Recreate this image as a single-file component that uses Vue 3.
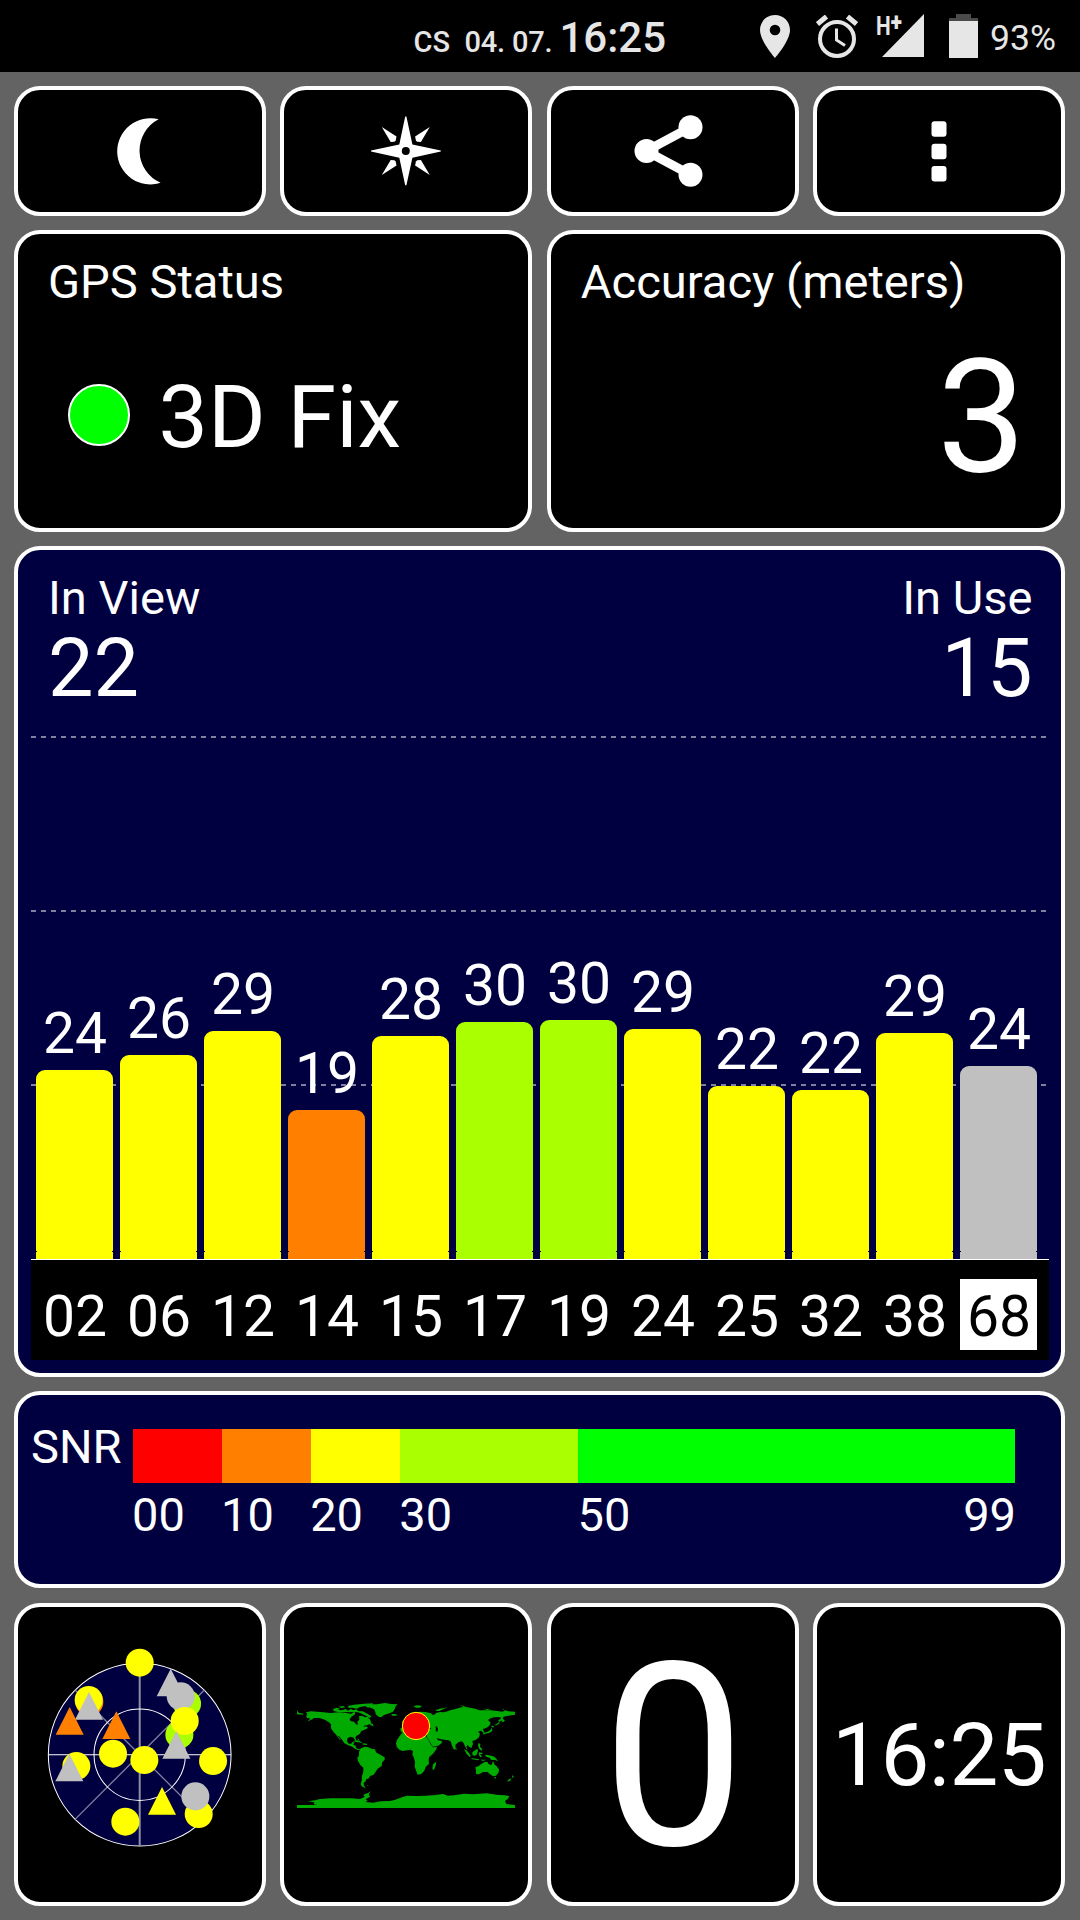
<script setup>
import { ref } from 'vue'

let inView = ref(22)
let inUse = ref(15)

let satellites = ref([
  { prn: '02', snr: 24, height: 189, level: 'yellow' },
  { prn: '06', snr: 26, height: 204, level: 'yellow' },
  { prn: '12', snr: 29, height: 228, level: 'yellow' },
  { prn: '14', snr: 19, height: 149, level: 'orange' },
  { prn: '15', snr: 28, height: 223, level: 'yellow' },
  { prn: '17', snr: 30, height: 237, level: 'lime' },
  { prn: '19', snr: 30, height: 239, level: 'lime' },
  { prn: '24', snr: 29, height: 230, level: 'yellow' },
  { prn: '25', snr: 22, height: 173, level: 'yellow' },
  { prn: '32', snr: 22, height: 169, level: 'yellow' },
  { prn: '38', snr: 29, height: 226, level: 'yellow' },
  { prn: '68', snr: 24, height: 193, level: 'gray', selected: true }
])

let scale = ref([
  { from: '00', size: 10, level: 'red' },
  { from: '10', size: 10, level: 'orange' },
  { from: '20', size: 10, level: 'yellow' },
  { from: '30', size: 20, level: 'lime' },
  { from: '50', size: 49, level: 'green', to: '99' }
])

// circles are GPS, triangles are GLONASS (y is the tip)
let sky = ref([
  { type: 'circle', x: 330, y: 97, level: 'yellow' },
  { type: 'triangle', x: 423, y: 115, level: 'gray' },
  { type: 'circle', x: 472, y: 220, level: 'lime' },
  { type: 'circle', x: 453, y: 198, level: 'gray' },
  { type: 'circle', x: 449, y: 313, level: 'lime' },
  { type: 'circle', x: 465, y: 272, level: 'yellow' },
  { type: 'triangle', x: 440, y: 302, level: 'gray' },
  { type: 'circle', x: 179, y: 215, level: 'orange' },
  { type: 'circle', x: 177, y: 209, level: 'yellow' },
  { type: 'triangle', x: 178, y: 185, level: 'gray' },
  { type: 'triangle', x: 120, y: 230, level: 'orange' },
  { type: 'triangle', x: 260, y: 243, level: 'orange' },
  { type: 'circle', x: 250, y: 370, level: 'yellow' },
  { type: 'circle', x: 344, y: 389, level: 'yellow' },
  { type: 'circle', x: 550, y: 392, level: 'yellow' },
  { type: 'circle', x: 140, y: 407, level: 'yellow' },
  { type: 'triangle', x: 119, y: 370, level: 'gray' },
  { type: 'triangle', x: 397, y: 470, level: 'yellow' },
  { type: 'circle', x: 507, y: 551, level: 'yellow' },
  { type: 'circle', x: 497, y: 498, level: 'gray' },
  { type: 'circle', x: 287, y: 574, level: 'yellow' }
])

//----------------------------------functions----------------------------//

function trianglePoints(item) {
  return `${item.x},${item.y} ${item.x - 42},${item.y + 83} ${item.x + 42},${item.y + 83}`
}
</script>

<template>
  <div class="screen">
    <header class="status-bar">
      <span class="carrier">CS</span>
      <span class="date">04. 07.</span>
      <span class="clock">16:25</span>
      <svg class="pin" viewBox="0 0 30 43">
        <path fill-rule="evenodd" d="M15 0C6.600 0 0 6.600 0 15C0 26 15 43 15 43S30 26 30 15C30 6.600 23.400 0 15 0ZM15 9.700A5.300 5.300 0 1 1 15 20.300A5.300 5.300 0 1 1 15 9.700Z" />
      </svg>
      <svg class="alarm" viewBox="0 0 42 43">
        <circle cx="21" cy="24" r="17" />
        <path d="M20.500 13.500V25L29 30.500" class="hands" />
        <path d="M1.500 9L10.500 1.500M40.500 9L31.500 1.500" class="bells" />
      </svg>
      <div class="signal">
        <span class="network">H<b>+</b></span>
        <svg viewBox="0 0 42 43">
          <path d="M0 43L42 0V43Z" />
        </svg>
      </div>
      <svg class="battery" viewBox="0 0 29 44">
        <path d="M7 0H22V4H29V7H0V4H7Z" class="empty" />
        <path d="M0 7H29V44H0Z" />
      </svg>
      <span class="percent">93%</span>
    </header>

    <main class="panels">
      <div class="row tools">
        <button class="card">
          <svg viewBox="99.900 111 80 80">
            <path d="M158.500 119.300A33.100 33.100 0 1 0 160.500 182.800A35.200 35.200 0 0 1 158.500 119.300Z" />
          </svg>
        </button>
        <button class="card">
          <svg viewBox="366.200 111 80 80">
            <path fill-rule="evenodd" d="M405.400 116.500H406.600L412.600 144.500L441 150.500V151.500L412.600 157.700L406.600 185.300H405.400L399.500 157.700L371.200 151.500V150.500L399.500 144.500ZM406 147A4 4 0 1 0 406 155A4 4 0 1 0 406 147Z" />
            <path d="M382 127L396.700 136.500L395.900 140.600L394.600 141.800L390.900 142Z" />
            <path d="M430 127L415.300 136.500L416.100 140.600L417.400 141.800L421.100 142Z" />
            <path d="M382 175L396.700 165.500L395.900 161.400L394.600 160.200L390.900 160Z" />
            <path d="M430 175L415.300 165.500L416.100 161.400L417.400 160.200L421.100 160Z" />
          </svg>
        </button>
        <button class="card">
          <svg viewBox="632.500 111 80 80">
            <path d="M690 127.300L645.700 151L690 174.700" class="link" />
            <circle cx="646" cy="151" r="12" />
            <circle cx="690" cy="127.300" r="12" />
            <circle cx="690" cy="174.700" r="12" />
          </svg>
        </button>
        <button class="card">
          <svg viewBox="899 111 80 80">
            <rect x="931.500" y="121.300" width="15" height="15.500" rx="3" />
            <rect x="931.500" y="143.700" width="15" height="15.500" rx="3" />
            <rect x="931.500" y="166" width="15" height="15.500" rx="3" />
          </svg>
        </button>
      </div>

      <div class="row fix">
        <section class="card text-card">
          <h2>GPS Status</h2>
          <div class="fix-value">
            <i class="dot"></i>
            <span>3D Fix</span>
          </div>
        </section>
        <section class="card text-card">
          <h2>Accuracy (meters)</h2>
          <div class="accuracy-value">3</div>
        </section>
      </div>

      <section class="card navy signals">
        <div class="totals">
          <div>
            <h2>In View</h2>
            <div class="total">{{ inView }}</div>
          </div>
          <div class="right">
            <h2>In Use</h2>
            <div class="total">{{ inUse }}</div>
          </div>
        </div>
        <div class="chart">
          <svg class="grid-lines" viewBox="0 0 1018 523">
            <path d="M0 1H1015M0 175H1015M0 349H1015" />
          </svg>
          <div v-for="item in satellites" :key="item.prn" class="column">
            <span>{{ item.snr }}</span>
            <div :class="['bar', item.level]" :style="{ height: item.height + 'px' }"></div>
          </div>
        </div>
        <div class="prns">
          <span v-for="item in satellites" :key="item.prn" :class="{ selected: item.selected }">{{ item.prn }}</span>
        </div>
      </section>

      <section class="card navy snr">
        <h2>SNR</h2>
        <div class="scale">
          <div v-for="item in scale" :key="item.from" class="step" :style="{ flexGrow: item.size }">
            <div :class="['swatch', item.level]"></div>
            <div class="ticks">
              <span>{{ item.from }}</span>
              <span v-if="item.to">{{ item.to }}</span>
            </div>
          </div>
        </div>
      </section>

      <div class="row bottom">
        <section class="card">
          <svg class="radar" viewBox="55 98 550 550">
            <circle cx="330" cy="373" r="274" class="ring sky" />
            <path d="M136 567L524 179M136 179L524 567" class="diagonal" />
            <path d="M330 99V647" class="meridian" />
            <circle cx="330" cy="373" r="137" class="ring" />
            <path d="M56 373H604" class="horizon" />
            <template v-for="(item, index) in sky" :key="index">
              <circle v-if="item.type === 'circle'" :cx="item.x" :cy="item.y" r="42" :class="item.level" />
              <polygon v-else :points="trianglePoints(item)" :class="item.level" />
            </template>
          </svg>
        </section>
        <section class="card">
          <svg class="world" viewBox="51 69 654 315">
            <!-- north america -->
            <path d="M51 91L56 98L70 101L68 104L51 103ZM78 97L92 94L112 95L130 97L152 99L175 97L196 98L214 102L217 99L222 96L226 98L224 104L216 109L209 117L211 123L222 125L228 133L234 134L232 125L238 119L237 109L245 107L256 112L263 110L271 120L274 130L263 135L253 137L250 141L260 139L264 144L254 149L243 154L240 161L229 168L226 173L229 181L226 183L221 173L212 170L203 174L201 183L206 191L214 191L216 187L223 186L220 194L227 197L228 204L236 208L245 206L242 210L234 210L226 207L217 200L205 196L193 190L187 181L177 169L173 168L183 181L179 179L169 165L160 155L153 145L153 133L146 126L134 119L119 114L103 114L94 119L84 124L86 120L92 116L82 114L78 109L82 103Z" />
            <!-- arctic islands -->
            <path d="M160 87L170 83L180 86L174 90L187 91L196 87L205 92L212 86L220 91L228 88L236 94L248 94L262 101L274 109L270 114L259 108L246 101L234 97L222 96L210 97L196 96L182 97L170 95L160 92ZM176 80L190 78L196 82L184 84ZM204 78L222 74L252 71L280 70L276 74L258 78L240 81L230 86L216 83L206 84ZM268 127L278 132L281 139L272 136Z" />
            <!-- greenland, iceland -->
            <path d="M257 79L270 73L290 73L315 69L334 72L353 73L347 79L344 88L338 96L324 101L312 105L304 112L296 110L287 103L286 96L282 88L272 83L259 82ZM334 102L344 102L352 104L349 107L337 107Z" />
            <!-- caribbean -->
            <path d="M218 184L232 181L244 186L248 190L237 187L228 186ZM248 190L260 191L262 195L249 194ZM231 174L236 178L240 182L235 181Z" />
            <!-- south america -->
            <path d="M243 205L254 200L265 202L276 207L285 208L288 217L298 223L314 232L314 239L307 246L305 258L293 266L287 275L281 284L270 288L267 295L259 298L256 305L251 309L252 317L255 320L246 320L242 313L245 302L246 288L250 275L250 263L241 255L234 243L232 233L237 227L237 215ZM250 318L257 322L252 324ZM261 315L266 316L263 318Z" />
            <!-- africa -->
            <path d="M368 157L384 154L400 155L402 161L411 165L418 162L435 166L445 179L452 193L459 202L471 201L469 208L459 221L447 232L446 241L447 251L437 261L433 272L424 282L413 284L410 277L404 260L405 245L400 229L397 224L399 214L392 209L382 211L368 213L358 209L350 200L348 190L351 180L359 168ZM469 245L467 257L462 269L457 268L459 253Z" />
            <!-- europe and asia -->
            <path d="M365 157L361 151L362 143L371 144L374 139L366 137L375 131L384 128L391 125L397 119L390 115L389 108L397 103L407 97L421 95L437 96L453 100L458 105L450 106L462 104L469 99L481 96L492 97L503 94L510 91L524 88L536 84L545 82L558 81L574 84L586 86L598 91L616 91L632 91L652 93L667 95L676 91L684 94L705 95L705 104L694 106L684 107L671 110L666 118L660 126L654 123L664 113L654 111L642 112L632 115L624 120L632 128L628 137L619 144L608 147L613 155L610 158L603 152L594 155L600 161L597 172L588 179L577 183L579 192L574 204L567 200L563 194L559 201L563 208L559 207L551 190L546 184L536 186L526 195L527 206L522 209L515 195L513 185L506 181L493 179L483 178L470 174L474 181L485 182L486 188L475 197L459 200L453 191L444 176L440 170L441 162L425 162L420 157L416 155L410 159L408 153L400 148L394 147L386 149L379 154L373 160ZM379 120L385 122L388 128L377 129ZM366 124L374 123L373 128L367 129Z" />
            <path d="M466 140L471 139L474 147L472 155L467 153L468 146ZM445 143L454 144L450 148L445 147Z" class="sea" />
            <!-- islands of the north sea routes -->
            <path d="M400 78L414 76L426 78L419 83L408 83ZM468 91L478 86L492 84L504 81L489 88L479 93L468 93ZM541 76L558 79L550 81ZM610 86L632 87L622 90ZM666 86L673 87L670 89ZM666 114L675 122L668 127L663 121Z" />
            <path d="M634 137L641 138L642 142L635 142ZM635 143L637 153L627 159L615 161L611 164L609 158L624 155L631 150ZM640 136L649 133L656 127L660 129L650 136ZM526 202L531 208L527 210Z" />
            <!-- indonesia -->
            <path d="M552 207L559 211L567 219L572 228L570 232L560 222ZM572 234L588 236L598 238L594 241L577 238ZM577 217L585 211L592 206L594 212L590 224L583 228L577 224ZM597 217L609 219L605 223L600 222L606 230L601 232L597 225ZM595 189L601 192L600 200L606 206L605 213L598 207L594 197ZM615 224L627 226L640 229L648 235L654 244L645 240L634 240L629 233L618 230ZM602 239L620 239L608 243Z" />
            <!-- australia, new zealand -->
            <path d="M586 262L596 258L604 252L612 247L622 245L625 251L634 256L639 243L643 253L650 259L657 268L656 277L648 287L639 289L630 283L623 276L609 276L597 283L588 282L588 272ZM642 291L648 291L646 297ZM697 286L702 289L696 295ZM694 294L691 302L682 305L684 300Z" />
            <!-- antarctica -->
            <path d="M51 375L111 375L101 373L103 367L83 364L105 361L120 357L151 355L180 355L214 355L240 357L254 351L250 344L264 339L273 333L266 343L270 350L257 358L263 362L256 366L280 368L302 364L330 363L346 359L366 352L380 347L410 348L438 347L466 345L490 342L504 347L522 346L552 341L580 343L620 340L650 344L674 346L688 348L684 356L675 363L679 372L705 375L705 384L51 384Z" />
            <circle cx="408" cy="138" r="41" class="marker" />
          </svg>
        </section>
        <section class="card speed"><span>0</span></section>
        <section class="card time">16:25</section>
      </div>
    </main>
  </div>
</template>

<style>
body {
  background-color: #636363;
}
</style>

<style scoped>
* {
  box-sizing: border-box;
}

.screen {
  width: 1080px;
  height: 1920px;
  display: flex;
  flex-direction: column;
  overflow: hidden;
  background-color: #636363;
  color: #fff;
  font-family: Roboto, sans-serif;
}

svg {
  display: block;
  fill: currentColor;
}

h2 {
  margin: 0;
  font-size: 47.100px;
  font-weight: 400;
  line-height: 56px;
}

/* status bar */
.status-bar {
  height: 72px;
  display: flex;
  align-items: flex-start;
  padding-left: 413.5px;
  background-color: #000;
  color: #e6e6e6;
  white-space: nowrap;
}

.carrier,
.date {
  margin-top: 26px;
  font-size: 29px;
  font-weight: 500;
  line-height: 32px;
}

.carrier {
  width: 51px;
}

.date {
  width: 95px;
  letter-spacing: -0.2px;
}

.clock {
  width: 200px;
  margin-top: 14px;
  font-size: 42px;
  font-weight: 500;
  line-height: 48px;
}

.pin {
  width: 30px;
  height: 43px;
  margin-top: 15px;
}

.alarm {
  width: 42px;
  height: 43px;
  margin: 15px 0 0 26px;
  fill: none;
  stroke: currentColor;
  stroke-width: 4;
}

.alarm .hands {
  stroke-width: 3;
}

.alarm .bells {
  stroke-width: 5;
}

.signal {
  position: relative;
  margin: 14px 0 0 24px;
}

.signal svg {
  width: 42px;
  height: 43px;
}

.network {
  position: absolute;
  top: 0;
  left: -6px;
  font-size: 26px;
  font-weight: 700;
  line-height: 24px;
  transform: scaleX(0.8);
  transform-origin: left;
}

.network b {
  position: relative;
  top: -4px;
}

.battery {
  width: 29px;
  height: 44px;
  margin: 14px 0 0 25px;
}

.battery .empty {
  fill: #4a4a4a;
}

.percent {
  margin: 18px 0 0 12.500px;
  font-size: 35.500px;
  line-height: 41px;
}

/* cards */
.panels {
  display: flex;
  flex-direction: column;
  gap: 14px;
  padding: 14px 15px 14px 14px;
}

.row {
  display: flex;
  gap: 14.600px;
}

.row > .card {
  flex: 1 1 0;
  min-width: 0;
}

/* padding must not change the share of the row */
.row > .text-card {
  flex: 1 1 50%;
}

.card {
  border: 4px solid #fff;
  border-radius: 26px;
  background-color: #000;
  color: #fff;
}

.navy {
  background-color: #000040;
}

.tools .card {
  height: 130px;
  display: flex;
  justify-content: center;
  align-items: center;
  padding: 0;
}

.tools svg {
  width: 80px;
  height: 80px;
}

.link {
  fill: none;
  stroke: currentColor;
  stroke-width: 9;
}

.text-card {
  height: 302px;
  padding: 20px 30px;
}

.fix-value {
  display: flex;
  align-items: center;
  gap: 29px;
  margin: 55px 0 0 19.500px;
  font-size: 88px;
  line-height: 104px;
}

.dot {
  width: 62px;
  height: 62px;
  margin-bottom: 4px;
  border: 2px solid #fff;
  border-radius: 50%;
  background-color: #0f0;
}

.accuracy-value {
  margin: 14px 5px 0 0;
  font-size: 158.500px;
  line-height: 186px;
  text-align: right;
}

/* satellites */
.signals {
  height: 831px;
  padding: 20px 12px 0 13px;
}

.totals {
  height: 166px;
  display: flex;
  justify-content: space-between;
  padding: 0 16.500px 0 17px;
}

.total {
  margin-top: 3px;
  font-size: 81px;
  line-height: 80px;
}

.right {
  text-align: right;
}

.chart {
  position: relative;
  height: 524px;
  display: flex;
  align-items: flex-end;
  gap: 7px;
  padding-left: 5px;
  border-bottom: 1px solid #fff;
}

.grid-lines {
  position: absolute;
  top: 0;
  left: 0;
  width: 1018px;
  height: 523px;
  fill: none;
  stroke: #8080a0;
  stroke-width: 2;
  stroke-dasharray: 5 5;
}

.column {
  position: relative;
  width: 77px;
  display: flex;
  flex-direction: column;
  align-items: center;
  font-size: 57px;
  line-height: 60px;
}

.column span {
  padding-left: 1px;
}

.bar {
  position: relative;
  width: 77px;
  margin-top: 6px;
  border-radius: 9px 9px 0 0;
}

/* thin seam where the rounded top meets the base */
.bar::after {
  content: '';
  position: absolute;
  right: 0;
  bottom: 7px;
  left: 0;
  height: 1px;
  border: solid #000040;
  border-width: 0 1px;
}

.prns {
  height: 100px;
  display: flex;
  align-items: flex-start;
  gap: 7px;
  padding: 19px 0 0 5px;
  background-color: #000;
}

.prns span {
  width: 77px;
  height: 71px;
  padding-left: 1px;
  font-size: 57px;
  line-height: 75px;
  text-align: center;
}

.prns .selected {
  background-color: #fff;
  color: #000;
}

/* SNR scale */
.snr {
  height: 197px;
  display: flex;
  padding: 24px 46px 0 13px;
}

.snr h2 {
  width: 102px;
}

.scale {
  flex: 1;
  display: flex;
  padding-top: 10px;
}

.step {
  flex-basis: 0;
  min-width: 0;
}

.swatch {
  height: 54px;
}

.ticks {
  display: flex;
  justify-content: space-between;
  margin: 4px -1px 0;
  font-size: 47px;
  line-height: 56px;
}

.red {
  background-color: #f00;
  fill: #f00;
}

.orange {
  background-color: #ff8000;
  fill: #ff8000;
}

.yellow {
  background-color: #ff0;
  fill: #ff0;
}

.lime {
  background-color: #af0;
  fill: #af0;
}

.green {
  background-color: #0f0;
  fill: #0f0;
}

.gray {
  background-color: #c0c0c0;
  fill: #c0c0c0;
}

/* bottom row */
.bottom {
  margin-top: 1px;
}

.bottom .card {
  height: 303px;
  display: flex;
  justify-content: center;
  align-items: center;
}

.radar {
  width: 183.400px;
  height: 183.400px;
  overflow: visible;
}

.ring {
  fill: none;
  stroke: #fff;
  stroke-width: 3;
}

.ring.sky {
  fill: #000040;
}

.diagonal {
  fill: none;
  stroke: #8080a0;
  stroke-width: 4;
}

.meridian {
  stroke: #8f8fa6;
  stroke-width: 6;
}

.horizon {
  stroke: #fff;
  stroke-width: 3;
}

.world {
  width: 218px;
  height: 105px;
  margin-top: 2px;
  fill: #00aa00;
}

.world .sea {
  fill: #000;
}

.world .marker {
  fill: #f00;
  stroke: #ff0;
  stroke-width: 3;
}

.speed {
  font-size: 256px;
  line-height: 300px;
}

.speed span {
  padding-left: 2px;
  margin-top: 6px;
}

.time {
  font-size: 87px;
  letter-spacing: -0.5px;
}
</style>
